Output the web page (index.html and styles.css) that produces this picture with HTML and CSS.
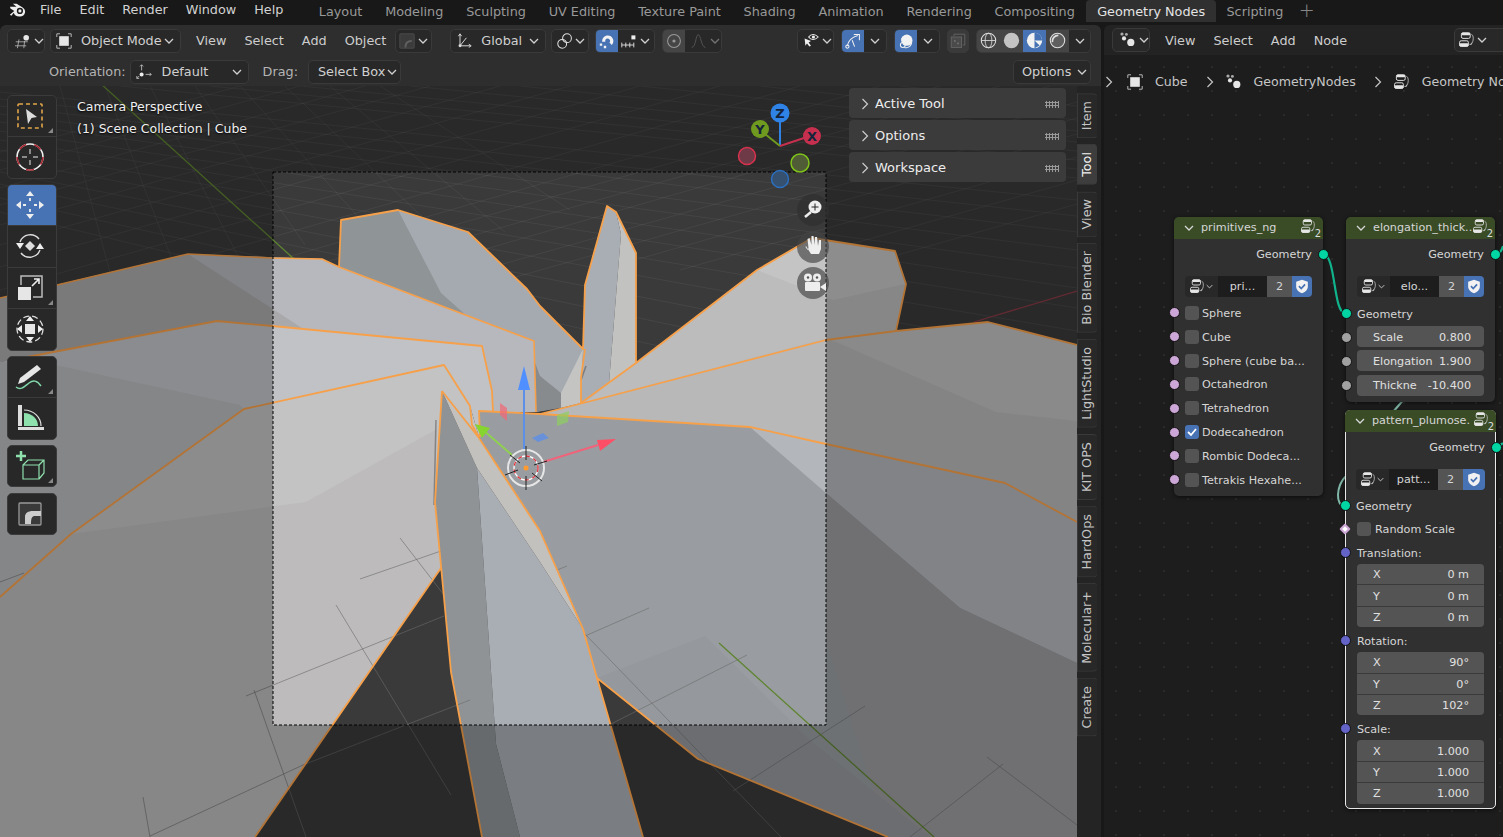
FILE: index.html
```html
<!DOCTYPE html>
<html lang="en">
<head>
<meta charset="utf-8">
<title>Blender Geometry Nodes</title>
<link rel="stylesheet" href="styles.css">
</head>
<body>
<svg class="defs" width="0" height="0" aria-hidden="true">
  <defs>
    <symbol id="chev" viewBox="0 0 10 6"><path d="M1 1l4 4 4-4" fill="none" stroke="currentColor" stroke-width="1.3"/></symbol>
    <symbol id="right" viewBox="0 0 8 12"><path d="M1.5 1l5 5-5 5" fill="none" stroke="currentColor" stroke-width="1.2"/></symbol>
    <symbol id="objmode" viewBox="0 0 20 20"><path d="M1 5V1h4M15 1h4v4M19 15v4h-4M5 19H1v-4" fill="none" stroke="#bbb" stroke-width="1.2"/><rect x="4" y="4" width="12" height="12" fill="#e6e6e6"/></symbol>
    <symbol id="nodes" viewBox="0 0 20 20"><circle cx="2.5" cy="2.5" r="2" fill="#aaa"/><circle cx="8" cy="3" r="1.8" fill="#aaa"/><circle cx="5" cy="8" r="2.6" fill="#e6e6e6"/><circle cx="13.5" cy="13" r="4.5" fill="#e6e6e6"/></symbol>
    <symbol id="ng" viewBox="0 0 20 20"><rect x="3" y="1" width="11" height="7" rx="2" fill="none" stroke="#e6e6e6" stroke-width="1.2"/><rect x="3" y="1" width="11" height="3" rx="1.5" fill="#e6e6e6"/><rect x="0.7" y="11" width="11" height="7" rx="2" fill="none" stroke="#e6e6e6" stroke-width="1.2"/><rect x="0.7" y="14" width="11" height="4" rx="1.5" fill="#e6e6e6"/><path d="M15.5 3c3 .5 3.300 9 -.5 12.500M13 15.500h2.500v-2" fill="none" stroke="#ccc"/></symbol>
    <symbol id="shield" viewBox="0 0 16 18"><path d="M8 .8l7 2.400v5.800c0 4-3.200 6.800-7 8.200-3.800-1.400-7-4.200-7-8.200V3.200z" fill="#f2f2f2"/><path d="M4.300 8.500l2.800 3 4.600-5" fill="none" stroke="#4772b3" stroke-width="2"/></symbol>
  </defs>
</svg>
<div class="app">
  <header class="topbar">
    <svg class="logo" viewBox="0 0 20 18"><path d="M1 6h7L4 3h4l6 3.500c5 3 3.500 9.500-2.500 10-3.500.3-6-1.500-6.500-4L2.500 15.500.8 14.500 5.500 10.500 1.500 8z" fill="#eee"/><circle cx="11.500" cy="10.500" r="3.300" fill="#181818"/><circle cx="11.500" cy="10.500" r="1.700" fill="#eee"/></svg>
    <nav class="mainmenu"><span>File</span><span>Edit</span><span>Render</span><span>Window</span><span>Help</span></nav>
    <nav class="tabs">
      <span class="tab">Layout</span><span class="tab">Modeling</span><span class="tab">Sculpting</span><span class="tab">UV Editing</span><span class="tab">Texture Paint</span><span class="tab">Shading</span><span class="tab">Animation</span><span class="tab">Rendering</span><span class="tab">Compositing</span><span class="tab tab-on">Geometry Nodes</span><span class="tab">Scripting</span><span class="tab tab-plus">+</span>
    </nav>
  </header>
  <main class="areas">
    <section class="left">
      <div class="toolheader">
        <div class="hrow hrow-1">
          <div class="btn b-editor"><svg class="ic16" viewBox="0 0 20 20"><circle cx="14" cy="6" r="3.500" fill="#e6e6e6"/><path d="M1 11h15M0 16h14M5 8L3 19M12 10l-1 9" stroke="#bbb" fill="none"/></svg><svg class="chev"><use href="#chev"/></svg></div>
          <div class="btn b-mode"><svg class="ic16"><use href="#objmode"/></svg><span class="grow">Object Mode</span><svg class="chev"><use href="#chev"/></svg></div>
          <span class="menu m-first">View</span><span class="menu">Select</span><span class="menu">Add</span><span class="menu">Object</span>
          <div class="btn b-dim"><svg class="ic16" viewBox="0 0 20 20"><rect x="1" y="1" width="18" height="18" rx="1" fill="#3d3d3d" stroke="#555"/><path d="M8 18c0-6 3-8 8-8" fill="none" stroke="#666" stroke-width="2.500"/></svg><svg class="chev"><use href="#chev"/></svg></div>
          <div class="btn b-global"><svg class="ic16" viewBox="0 0 20 20"><path d="M5 16V2M5 16h13M5 16L13 6M3 4l2-3 2 3M16 14l3 2-3 2" fill="none" stroke="#ddd" stroke-width="1.200"/><circle cx="5" cy="16" r="1.800" fill="#ddd"/></svg><span class="grow">Global</span><svg class="chev"><use href="#chev"/></svg></div>
          <div class="btn b-link"><svg class="ic16" viewBox="0 0 20 20"><circle cx="12.500" cy="6.500" r="5.500" fill="none" stroke="#ddd" stroke-width="1.300"/><circle cx="6.500" cy="13.500" r="5.500" fill="none" stroke="#ddd" stroke-width="1.300"/></svg><svg class="chev"><use href="#chev"/></svg></div>
          <div class="btn b-snap"><span class="on seg-22"><svg class="ic16" viewBox="0 0 20 20"><path d="M4 11a7 7 0 1 1 12 4l-3-3a3 3 0 1 0-5-1z" fill="#f2f2f2"/><path d="M1 13h3v3H1zM6 16h3v3H6z" fill="#f2f2f2"/></svg></span><svg class="ic16 pad-l" viewBox="0 0 20 20"><path d="M1 12v6M6 12v6M11 12v6M16 12v6M1 15h15" stroke="#ddd" fill="none" stroke-width="1.200"/><rect x="13" y="3" width="5" height="5" fill="#eee"/></svg><svg class="chev"><use href="#chev"/></svg></div>
          <div class="btn b-prop"><span class="seg-dim"><svg class="ic16" viewBox="0 0 20 20"><circle cx="10" cy="10" r="8" fill="none" stroke="#999" stroke-width="1.300"/><circle cx="10" cy="10" r="2" fill="#999"/></svg></span><svg class="ic16 pad-l dim" viewBox="0 0 20 20"><path d="M1 18c5 0 5-16 8-16s4 16 9 16" fill="none" stroke="#888" stroke-width="1.200"/></svg><svg class="chev dim"><use href="#chev"/></svg></div>
          <div class="spacer"></div>
          <div class="btn b-vis"><svg class="ic16" viewBox="0 0 20 20"><path d="M7 5c3-4 8-4 12 0-4 4-9 4-12 0z" fill="none" stroke="#eee" stroke-width="1.300"/><circle cx="13" cy="5" r="2" fill="#eee"/><path d="M2 7l8 3-3 2 3 4-2 1-3-4-2 3z" fill="#eee"/></svg><svg class="chev"><use href="#chev"/></svg></div>
          <div class="btn b-gizmo"><span class="on seg-22"><svg class="ic16" viewBox="0 0 20 20"><path d="M3 16c1-6 6-11 13-13" fill="none" stroke="#f2f2f2" stroke-width="1.300"/><path d="M11 2h7v7M9 9l3 8" fill="none" stroke="#f2f2f2" stroke-width="1.300"/><circle cx="3" cy="17" r="2" fill="none" stroke="#f2f2f2" stroke-width="1.300"/></svg></span><span class="seg-chev"><svg class="chev"><use href="#chev"/></svg></span></div>
          <div class="btn b-over"><span class="on seg-22"><svg class="ic16" viewBox="0 0 20 20"><path d="M4 8a7 7 0 1 1 4 10" fill="none" stroke="#f2f2f2" stroke-width="1.300"/><circle cx="11" cy="9" r="7" fill="#f2f2f2"/><circle cx="6" cy="15" r="3" fill="none" stroke="#f2f2f2" stroke-width="1.300"/></svg></span><span class="seg-chev"><svg class="chev"><use href="#chev"/></svg></span></div>
          <div class="btn b-xray"><svg class="ic16" viewBox="0 0 20 20"><rect x="1.500" y="5" width="13" height="13" fill="#4a4a4a" stroke="#6a6a6a"/><path d="M5 4V1.500h13.500V15H16" fill="none" stroke="#6a6a6a"/><rect x="5" y="9" width="2" height="2" fill="#777"/><rect x="9" y="12" width="2" height="2" fill="#777"/></svg></div>
          <div class="btn b-shade">
            <span class="shade"><svg class="ic17" viewBox="0 0 20 20"><circle cx="10" cy="10" r="8.500" fill="none" stroke="#ddd" stroke-width="1.200"/><ellipse cx="10" cy="10" rx="4" ry="8.500" fill="none" stroke="#ddd"/><path d="M1.500 10h17" stroke="#ddd"/></svg></span>
            <span class="shade"><svg class="ic17" viewBox="0 0 20 20"><circle cx="10" cy="10" r="9" fill="#c4c4c4"/></svg></span>
            <span class="shade shade-on"><svg class="ic17" viewBox="0 0 20 20"><circle cx="10" cy="10" r="9" fill="#f2f2f2"/><path d="M10 1a9 9 0 0 1 9 9l-9 0zM10 10l6 6-6 3z" fill="#4772b3"/></svg></span>
            <span class="shade"><svg class="ic17" viewBox="0 0 20 20"><circle cx="10" cy="10" r="8.500" fill="#5f5f5f" stroke="#ddd" stroke-width="1.300"/><path d="M4 12A7 7 0 0 1 11 4" fill="none" stroke="#ddd" stroke-width="2"/></svg></span>
            <span class="seg-chev"><svg class="chev"><use href="#chev"/></svg></span>
          </div>
        </div>
        <div class="hrow hrow-2">
          <span class="lbl l-orient">Orientation:</span>
          <div class="btn b-orient"><svg class="ic16" viewBox="0 0 20 20"><path d="M7 1v7M5 3l2-2 2 2M1 18l3-3M1 15v3h3M12 13h7M17 11l2 2-2 2" fill="none" stroke="#ccc"/><circle cx="7" cy="13" r="2.500" fill="#eee"/></svg><span class="grow">Default</span><svg class="chev"><use href="#chev"/></svg></div>
          <span class="lbl l-drag">Drag:</span>
          <div class="btn b-drag"><span class="grow">Select Box</span><svg class="chev"><use href="#chev"/></svg></div>
          <div class="spacer"></div>
          <div class="btn b-options"><span class="grow">Options</span><svg class="chev"><use href="#chev"/></svg></div>
        </div>
      </div>
      <div class="viewarea">
        <div class="viewport">
          <svg class="scene" viewBox="0 86 1077 751" width="1077" height="751">
            <rect x="0" y="86" width="1077" height="751" fill="#3a3a3a"/>
            <g class="gridlines">
              <path d="M0 92L1077 200M0 99L1077 216M0 106L1077 232M0 114L1077 250M0 122L1077 268M0 131L1077 288M0 140L1077 308M0 150L1077 331M0 160L1077 355M0 172L1077 382M0 184L1077 410M0 198L1077 440M0 212L1077 470M120 86L1077 178M210 86L1077 169M300 86L1077 160M410 86L1077 151M520 86L1077 142M640 86L1077 131M760 86L1077 120M900 86L1077 106"/>
              <path d="M0 152L240 86M0 170L300 86M0 188L365 86M0 205L430 86M0 225L500 86M0 245L570 86M0 267L640 86M0 290L720 86M0 315L800 86M0 340L880 86M70 335L940 86M140 330L1000 86M240 320L1050 86M340 310L1077 102M470 290L1077 118M600 270L1077 134M680 270L1077 157M760 270L1077 180M880 260L1077 204"/>
              <path d="M60 86L112 280M105 86L176 270M150 86L240 260M195 86L305 245M240 86L372 232M285 86L438 232M330 86L505 232M380 86L570 210"/>
            </g>
            <path class="axis-g" d="M100 83L294 259"/>
            <path class="axis-r" d="M974 322L1077 291"/>

            <polygon fill="#a5aab0" points="339,267 341,220 398,210 468,232 527,289 540,306 583,349 581,403 536,412 534,341"/>
            <polygon fill="#8f9497" points="339,267 341,220 398,210 441,293 468,317"/>
            <polygon fill="#878b8e" points="540,376 561,393 561,408 536,412 534,360"/>
            <polygon fill="#c4c4c2" points="561,393 583,349 581,403 561,408"/>

            <polygon fill="#b6b8bd" points="0,298 188,254 322,259 339,267 534,341 536,412 493,412 482,346 272,326 217,321 27,357 0,362"/>
            <polygon fill="#a9a9ab" points="0,298 57,285 188,254 305,330 272,326 217,321 27,357 0,362"/>

            <polygon fill="#c1c2c6" points="27,357 217,321 272,326 482,346 492,391 493,412 479,437 470,406 444,365 244,409 71,534 0,597 0,362"/>
            <polygon fill="#b9babd" points="60,366 240,405 244,409 71,534 0,597 0,362"/>

            <polygon fill="#c3c3c3" points="0,597 71,534 244,409 444,365 470,406 479,437 442,391 435,502 441,568 255,837 0,837"/>
            <polygon fill="#bdbbbb" points="71,534 306,502 437,429 435,502 441,568 255,837 0,837 0,597"/>

            <polygon fill="#bcbcbc" points="581,403 636,363 757,270 812,238 895,251 906,284 896,331 826,340 595,400"/>
            <polygon fill="#c4c4c4" points="757,270 833,300 905,284 895,251 812,238"/>
            <polygon fill="#a9aeb4" points="583,349 585,285 607,206 616,212 621,234 609,383 590,398 581,403"/>
            <polygon fill="#c2c2c0" points="616,212 636,253 636,363 609,383 621,234"/>

            <polygon fill="#bfbfbf" points="540,414 595,400 826,340 896,331 988,322 1077,345 1077,522 1005,483 826,444 750,427"/>
            <polygon fill="#b8b8b8" points="827,338 996,412 1077,421 1077,522 1005,483 826,444 750,427 540,414"/>

            <polygon fill="#999da1" points="480,411 540,414 750,427 826,444 1005,483 1077,522 1077,837 888,837 698,759 597,678 583,629 540,531 479,437"/>
            <polygon fill="#b3b6bb" points="750,427 826,444 1005,483 1077,522 1077,663 960,608 826,493"/>
            <polygon fill="#9b9b9e" points="826,493 960,608 1077,663 1077,837 888,837 826,640"/>
            <polygon fill="#95989c" points="597,678 698,759 888,837 930,837 810,740 705,636"/>

            <polygon fill="#8f9396" points="442,391 477,468 496,744 520,837 482,837 451,672 435,502"/>
            <polygon fill="#a9aeb4" points="477,468 540,562 583,629 597,678 643,837 520,837 496,744"/>
            <polygon fill="#c3c1bd" points="442,391 479,438 540,531 583,629 540,562 477,468"/>

            <path class="floor" d="M400 538L444 595M360 579L441 551M336 605L451 795M246 696L444 616M254 690L306 837M143 797L150 837M150 836L303 765L470 700M0 582L24 573M557 570L567 566M585 636L649 608M585 634L781 837M609 725L747 655M733 791L865 706M910 837L1003 764M987 757L1077 825"/>
            <path class="axis-g" d="M719 643L934 837"/>
            <path class="smudge" d="M436 420L434 505M586 366L581 380"/>

            <path class="edge edge-b" d="M0 298L57 285L188 254L272 258L322 259L339 267L534 341L536 412"/>
            <path class="edge" d="M339 267L341 220L398 210L468 232L527 289L540 306L583 349L585 285L607 206L616 212L636 253L636 363L757 270L812 238L895 251L906 284L896 331M585 349L581 378L581 403"/>
            <path class="edge" d="M27 357L217 321L272 326L482 346L492 391L493 412"/>
            <path class="edge" d="M0 597L71 534L244 409L444 365L470 406L472 425L479 437"/>
            <path class="edge" d="M480 437L479 411L540 414L750 427L826 444L1005 483L1077 522"/>
            <path class="edge" d="M540 414L595 400L826 340L896 331L988 322L1077 345M581 403L636 363"/>
            <path class="edge" d="M442 391L435 502L451 672L482 837M442 391L479 438L540 531L583 629L597 678L643 837M441 568L255 837M597 678L698 759L888 837"/>

            <path class="pass" fill-rule="evenodd" d="M0 86H1077V837H0ZM273 172H826V725H273Z"/>
            <rect class="frame" x="273" y="172" width="553" height="553"/>

            <g class="tgizmo">
              <path d="M524 389V450" stroke="#5b8fe8" stroke-width="2"/><polygon points="524,366 518,390 530,390" fill="#4f8fff"/>
              <path d="M483 430L512 455" stroke="#8fd14f" stroke-width="2"/><polygon points="475,424 490,428 482,438" fill="#85d42f"/>
              <path d="M543 462L598 445" stroke="#f0637a" stroke-width="2"/><polygon points="616,439 597,440 600,451" fill="#ff4f66"/>
              <polygon points="500,403 507,408 507,421 500,415" fill="#ee6b7a" opacity=".75"/>
              <polygon points="557,415 569,411 568,422 557,426" fill="#8fcf5f" opacity=".7"/>
              <polygon points="532,438 543,433 549,438 538,442" fill="#5b8fe8" opacity=".8"/>
              <circle cx="526" cy="468" r="18" fill="none" stroke="#e6e6e6" stroke-width="2"/>
              <circle cx="526" cy="468" r="12" fill="none" stroke="#fff" stroke-width="1.300"/>
              <circle cx="526" cy="468" r="12" fill="none" stroke="#e0303a" stroke-width="1.300" stroke-dasharray="4 4"/>
              <path d="M526 446V460M526 476V490M505 475L518 470M534 465L547 461M510 455L520 463M532 473L542 481" stroke="#222" fill="none"/>
              <circle cx="526" cy="468" r="2.500" fill="#ff9a2e"/>
            </g>

            <g class="ogizmo">
              <path d="M780 146V120" fill="none" stroke-width="2" stroke="#2f83e6"/>
              <path d="M780 146L765 134" stroke="#6f9a1f" stroke-width="2"/><path d="M780 146L804 138" stroke="#c6304e" stroke-width="2"/>
              <circle cx="747" cy="156" r="8.500" fill="#6e3a47" stroke="#d8324e" stroke-width="1.500"/>
              <circle cx="800" cy="163" r="9" fill="#4f5c35" stroke="#7fc31a" stroke-width="1.500"/>
              <circle cx="780" cy="179" r="8.500" fill="#36506f" stroke="#2b6fc0" stroke-width="1.500"/>
              <circle cx="780" cy="113" r="9.500" fill="#2f83e6"/><text x="780" y="118" class="gz">Z</text>
              <circle cx="760" cy="129" r="9" fill="#6f9a1f"/><text x="760" y="134" class="gz">Y</text>
              <circle cx="812" cy="136" r="9" fill="#c6304e"/><text x="812" y="141" class="gz">X</text>
            </g>

            <circle cx="813" cy="210" r="16" fill="#303030" opacity=".75"/>
            <circle cx="815" cy="207" r="6.500" fill="#eee"/><path d="M815 203.500v7M811.500 207h7" stroke="#222"/><path d="M811 212L805 217" stroke="#eee" stroke-width="2.500"/>
            <circle cx="813" cy="247" r="16" fill="#444" opacity=".65"/>
            <path d="M806 246l5 8h8l2-5 0-9-2 0-1 6-1-9-2 0-.5 8-1-9-2 0 0 9-2-7-2 1 1 9-1 2-2-3z" fill="#eee"/>
            <circle cx="813" cy="283" r="16" fill="#444" opacity=".65"/>
            <circle cx="808" cy="277.500" r="4" fill="#eee"/><circle cx="817" cy="277.500" r="4" fill="#eee"/><rect x="805" y="282" width="15" height="9" rx="1" fill="#eee"/><polygon points="820,287 826,283 826,291" fill="#eee"/><circle cx="808" cy="277.500" r="1.200" fill="#555"/><circle cx="817" cy="277.500" r="1.200" fill="#555"/>
          </svg>

          <div class="vinfo"><div>Camera Perspective</div><div>(1) Scene Collection | Cube</div></div>

          <div class="toolbar">
            <div class="tgroup">
              <div class="tool corner"><svg class="ic30" viewBox="0 0 30 30"><rect x="3" y="3" width="24" height="24" rx="1" fill="none" stroke="#e0a548" stroke-width="1.600" stroke-dasharray="4 3"/><path d="M11 8L22 16L16.500 17L13 23z" fill="#ddd"/></svg></div>
              <div class="tool"><svg class="ic30" viewBox="0 0 30 30"><circle cx="15" cy="15" r="13" fill="none" stroke="#eee" stroke-width="1.600"/><circle cx="15" cy="15" r="13" fill="none" stroke="#a5232e" stroke-width="1.600" stroke-dasharray="8 8.300"/><path d="M15 7v5M15 18v5M7 15h5M18 15h5" stroke="#aaa" stroke-width="1.500"/></svg></div>
            </div>
            <div class="tgroup">
              <div class="tool tool-on"><svg class="ic30" viewBox="0 0 30 30"><path d="M15 1l4 5h-8zM15 29l4-5h-8zM1 15l5-4v8zM29 15l-5-4v8z" fill="#eee"/><path d="M15 8v3M15 19v3M8 15h3M19 15h3" stroke="#eee" stroke-width="1.800"/></svg></div>
              <div class="tool"><svg class="ic30" viewBox="0 0 30 30"><path d="M5 11A11 11 0 0 1 24 8M25 19A11 11 0 0 1 6 22" fill="none" stroke="#ddd" stroke-width="1.400"/><path d="M15 10l5 5-5 5-5-5z" fill="#ddd"/><path d="M1 12h8l-4 6zM21 18h8l-4-6z" fill="#eee"/></svg></div>
              <div class="tool corner"><svg class="ic30" viewBox="0 0 30 30"><rect x="3" y="14" width="13" height="13" fill="#e6e6e6"/><path d="M6 12V3h21v21h-9" fill="none" stroke="#bbb" stroke-width="1.500"/><path d="M17 13l7-7M19 6h5v5" fill="none" stroke="#eee" stroke-width="1.600"/></svg></div>
              <div class="tool"><svg class="ic30" viewBox="0 0 30 30"><circle cx="15" cy="15" r="13" fill="none" stroke="#ddd" stroke-width="1.300" stroke-dasharray="6 3"/><rect x="10" y="10" width="10" height="10" fill="#e6e6e6"/><path d="M15 2l4 5h-8zM15 28l4-5h-8zM2 15l5-4v8zM28 15l-5-4v8z" fill="#eee"/></svg></div>
            </div>
            <div class="tgroup">
              <div class="tool corner"><svg class="ic30" viewBox="0 0 30 30"><path d="M22 3l4 4L9 20l-6 2 2-6z" fill="#e6e6e6"/><path d="M1 25c5 4 9-1 13-4s8-3 12 3" fill="none" stroke="#7fd6a8" stroke-width="1.500"/></svg></div>
              <div class="tool"><svg class="ic30" viewBox="0 0 30 30"><path d="M3 2h4v21h-4zM3 24h26v3h-26z" fill="#ddd"/><path d="M9 23V10a14 13 0 0 1 14 13z" fill="#8ee0ad"/><path d="M9 7a17 16 0 0 1 17 16" fill="none" stroke="#ddd" stroke-width="1.200"/></svg></div>
            </div>
            <div class="tgroup">
              <div class="tool corner"><svg class="ic30" viewBox="0 0 30 30"><path d="M8 14h16v14H8zM8 14l5-5h16v13l-5 6M24 14l5-5" fill="none" stroke="#8ee0ad" stroke-width="1.200"/><path d="M6 0v10M1 5h10" stroke="#8ee0ad" stroke-width="2.500"/></svg></div>
            </div>
            <div class="tgroup">
              <div class="tool"><svg class="ic30" viewBox="0 0 30 30"><rect x="4" y="4" width="22" height="22" rx="1" fill="#3a3a3a" stroke="#999" stroke-width="1.300"/><path d="M10 25V18c0-4 3-6 8-6h8v5h-6c-3 0-4 2-4 8z" fill="#ccc"/></svg></div>
            </div>
          </div>

          <div class="panels">
            <div class="panel"><svg class="pchev"><use href="#right"/></svg><span class="ptitle">Active Tool</span><span class="grip"></span></div>
            <div class="panel"><svg class="pchev"><use href="#right"/></svg><span class="ptitle">Options</span><span class="grip"></span></div>
            <div class="panel"><svg class="pchev"><use href="#right"/></svg><span class="ptitle">Workspace</span><span class="grip"></span></div>
          </div>
        </div>
        <aside class="sidetabs">
          <span class="stab">Item</span><span class="stab stab-on">Tool</span><span class="stab">View</span><span class="stab">Bio Blender</span><span class="stab">LightStudio</span><span class="stab">KIT OPS</span><span class="stab">HardOps</span><span class="stab">Molecular+</span><span class="stab">Create</span>
        </aside>
      </div>
    </section>

    <section class="right">
      <div class="nodeheader">
        <div class="btn b-editor"><svg class="ic16"><use href="#nodes"/></svg><svg class="chev"><use href="#chev"/></svg></div>
        <span class="menu m-first">View</span><span class="menu">Select</span><span class="menu">Add</span><span class="menu">Node</span>
        <div class="spacer"></div>
        <div class="btn b-ngclip"><svg class="ic16"><use href="#ng"/></svg><svg class="chev"><use href="#chev"/></svg></div>
      </div>
      <div class="canvas">
        <div class="crumbs">
          <svg class="crumb-sep first"><use href="#right"/></svg>
          <svg class="ic16"><use href="#objmode"/></svg><span class="crumb">Cube</span>
          <svg class="crumb-sep"><use href="#right"/></svg>
          <svg class="ic16"><use href="#nodes"/></svg><span class="crumb">GeometryNodes</span>
          <svg class="crumb-sep"><use href="#right"/></svg>
          <svg class="ic16"><use href="#ng"/></svg><span class="crumb">Geometry No</span>
        </div>
        <svg class="links" viewBox="1104 55 399 782" width="399" height="782">
          <path class="link" d="M1323 254C1336 254 1333 313 1345 313"/>
          <path class="link" d="M1495 254C1500 254 1502 250 1503 246"/>
          <path class="link" d="M1495 447C1499 447 1501 445 1503 443"/>
          <path class="link link-pale" d="M1405 398L1393 412"/>
          <path class="link link-pale" d="M1346 476C1336 486 1335 506 1345 506"/>
        </svg>

        <article class="node n1">
          <div class="nhead"><svg class="nchev"><use href="#chev"/></svg><span class="ntitle">primitives_ng</span><span class="nbadge"><svg class="ic15"><use href="#ng"/></svg><i>2</i></span></div>
          <div class="nrow out"><span>Geometry</span><b class="sock teal s-r"></b></div>
          <div class="selector"><span class="sel-ic"><svg class="ic15"><use href="#ng"/></svg><svg class="chev"><use href="#chev"/></svg></span><span class="sel-name">pri...</span><span class="sel-num">2</span><span class="sel-shield"><svg class="ic14"><use href="#shield"/></svg></span></div>
          <div class="checks">
            <div class="nrow chk"><b class="sock pink s-l"></b><i class="box"></i><span>Sphere</span></div>
            <div class="nrow chk"><b class="sock pink s-l"></b><i class="box"></i><span>Cube</span></div>
            <div class="nrow chk"><b class="sock pink s-l"></b><i class="box"></i><span>Sphere (cube ba...</span></div>
            <div class="nrow chk"><b class="sock pink s-l"></b><i class="box"></i><span>Octahedron</span></div>
            <div class="nrow chk"><b class="sock pink s-l"></b><i class="box"></i><span>Tetrahedron</span></div>
            <div class="nrow chk"><b class="sock pink s-l"></b><i class="box box-on"><svg viewBox="0 0 14 14"><path d="M3 7l3 3 5-6" fill="none" stroke="#fff" stroke-width="1.800"/></svg></i><span>Dodecahedron</span></div>
            <div class="nrow chk"><b class="sock pink s-l"></b><i class="box"></i><span>Rombic Dodeca...</span></div>
            <div class="nrow chk"><b class="sock pink s-l"></b><i class="box"></i><span>Tetrakis Hexahe...</span></div>
          </div>
        </article>

        <article class="node n2">
          <div class="nhead"><svg class="nchev"><use href="#chev"/></svg><span class="ntitle">elongation_thick..</span><span class="nbadge"><svg class="ic15"><use href="#ng"/></svg><i>2</i></span></div>
          <div class="nrow out"><span>Geometry</span><b class="sock teal s-r"></b></div>
          <div class="selector"><span class="sel-ic"><svg class="ic15"><use href="#ng"/></svg><svg class="chev"><use href="#chev"/></svg></span><span class="sel-name">elo...</span><span class="sel-num">2</span><span class="sel-shield"><svg class="ic14"><use href="#shield"/></svg></span></div>
          <div class="nrow in in-geo"><b class="sock teal s-l"></b><span>Geometry</span></div>
          <div class="frow"><b class="sock grey s-l"></b><div class="field"><span>Scale</span><span>0.800</span></div></div>
          <div class="frow"><b class="sock grey s-l"></b><div class="field"><span>Elongation</span><span>1.900</span></div></div>
          <div class="frow"><b class="sock grey s-l"></b><div class="field"><span>Thickne</span><span>-10.400</span></div></div>
        </article>

        <article class="node n3">
          <div class="nhead"><svg class="nchev"><use href="#chev"/></svg><span class="ntitle">pattern_plumose.</span><span class="nbadge"><svg class="ic15"><use href="#ng"/></svg><i>2</i></span></div>
          <div class="nrow out"><span>Geometry</span><b class="sock teal s-r"></b></div>
          <div class="selector"><span class="sel-ic"><svg class="ic15"><use href="#ng"/></svg><svg class="chev"><use href="#chev"/></svg></span><span class="sel-name">patt...</span><span class="sel-num">2</span><span class="sel-shield"><svg class="ic14"><use href="#shield"/></svg></span></div>
          <div class="nrow in in-geo"><b class="sock teal s-l"></b><span>Geometry</span></div>
          <div class="nrow chk chk-r"><b class="sock pink diamond s-l"></b><i class="box"></i><span>Random Scale</span></div>
          <div class="nrow in vlabel"><b class="sock violet s-l"></b><span>Translation:</span></div>
          <div class="vec"><div><span>X</span><span>0 m</span></div><div><span>Y</span><span>0 m</span></div><div><span>Z</span><span>0 m</span></div></div>
          <div class="nrow in vlabel"><b class="sock violet s-l"></b><span>Rotation:</span></div>
          <div class="vec"><div><span>X</span><span>90°</span></div><div><span>Y</span><span>0°</span></div><div><span>Z</span><span>102°</span></div></div>
          <div class="nrow in vlabel"><b class="sock violet s-l"></b><span>Scale:</span></div>
          <div class="vec"><div><span>X</span><span>1.000</span></div><div><span>Y</span><span>1.000</span></div><div><span>Z</span><span>1.000</span></div></div>
        </article>
      </div>
    </section>
  </main>
</div>
</body>
</html>
```

FILE: styles.css
```css
*{box-sizing:border-box}
html,body{margin:0;height:100%;overflow:hidden;background:#181818}
body{font:12.8px/1.25 "DejaVu Sans","Liberation Sans",sans-serif;color:#cfcfcf}
.defs{position:absolute}
.app{display:flex;flex-direction:column;width:1503px;height:837px}

/* top bar */
.topbar{height:25px;flex:none;display:flex;align-items:flex-start;background:#181818;position:relative}
.logo{width:19px;height:17px;margin:1px 0 0 9px;flex:none}
.mainmenu{display:flex;gap:18px;margin-left:12px;padding-top:2px;height:17px;align-items:center;color:#d2d2d2}
.tabs{display:flex;margin-left:24px;align-items:flex-start}
.tab{height:22px;padding:4px 11.400px 0;color:#999;white-space:nowrap}
.tab-on{background:#303030;color:#e4e4e4;border-radius:4px 4px 0 0;padding:4px 11px 0;margin:0 -1px 0 0}
.tab-plus{font-size:19px;padding:0 0 0 4px;color:#888;font-weight:300;line-height:1.1}

.areas{flex:1;display:flex;gap:3px;min-height:0}
.left{width:1101px;display:flex;flex-direction:column;border-radius:6px 6px 0 0;overflow:hidden}
.right{flex:1;display:flex;flex-direction:column;border-radius:6px 0 0 0;overflow:hidden;background:#1d1d1d}

/* 3D header */
.toolheader{height:61px;flex:none;background:#2e2e2e;color:#c9c9c9}
.hrow{display:flex;align-items:center;padding:0 10px 0 7px}
.hrow-1{height:31px;padding-top:0}
.hrow-2{height:30px;padding-top:2px}
.spacer{flex:1}
.btn{height:24px;display:flex;align-items:center;background:#282828;border:1px solid #3a3a3a;border-radius:5px;flex:none;color:#d0d0d0;padding:0 5px;white-space:nowrap;overflow:hidden}
.grow{flex:1;min-width:0}
.chev{width:10px;height:6px;color:#d0d0d0;flex:none}
.ic16{width:16px;height:16px;flex:none}
.ic17{width:17px;height:17px}
.ic15{width:15px;height:15px;flex:none}
.ic14{width:14px;height:15px}
.ic30{width:30px;height:30px}
.pad-l{margin-left:9px}
.dim{opacity:.45}
.menu{flex:none;margin-left:18px;color:#cdcdcd}
.m-first{margin-left:15px}
.b-editor{width:38px;gap:3px;padding:0 4px 0 7px}
.b-mode{width:131px;margin-left:5px;gap:9px;padding:0 6px 0 5px}
.b-dim{width:37px;margin-left:9px;gap:3px;padding:0 6px 0 3px}
.b-dim .ic16{opacity:.9}
.b-global{width:96px;margin-left:18px;gap:9px;padding:0 6px 0 5px}
.b-link{width:38px;margin-left:5px;gap:2px;padding:0 4px 0 5px}
.b-snap{width:60px;margin-left:6px;padding:0 4px 0 0}
.b-snap .pad-l{margin-left:3px;margin-right:3px}
.on{display:flex;align-items:center;justify-content:center;background:#4772b3;height:22px}
.seg-22{width:22px;flex:none}
.seg-dim{display:flex;align-items:center;justify-content:center;background:#454545;width:22px;height:22px;flex:none}
.seg-chev{flex:1;display:flex;align-items:center;justify-content:center;height:22px}
.b-prop{width:60px;margin-left:7px;padding:0 2px 0 0;gap:3px}
.b-prop .pad-l{margin-left:3px}
.b-vis{width:37px;gap:3px;padding:0 4px 0 5px}
.b-gizmo{width:46px;margin-left:7px;padding:0}
.b-over{width:46px;margin-left:7px;padding:0}
.b-xray{width:22px;margin-left:7px;padding:0 2px;background:#3a3a3a}
.b-shade{width:115px;margin-left:7px;padding:0}
.shade{width:23px;height:22px;background:#454545;display:flex;align-items:center;justify-content:center;flex:none}
.shade-on{background:#4772b3}
.lbl{flex:none;color:#b4b4b4}
.l-orient{margin-left:42px}
.b-orient{width:119px;margin-left:4px;gap:10px;padding:0 6px 0 5px}
.l-drag{margin-left:14px}
.b-drag{width:93px;margin-left:10px;padding:0 3px 0 9px}
.b-options{width:78px;padding:0 3px 0 8px}

/* viewport */
.viewarea{flex:1;display:flex;min-height:0;background:#242424}
.viewport{width:1077px;flex:none;position:relative;overflow:hidden}
.scene{display:block}
.gridlines path{fill:none;stroke:#fff;stroke-opacity:.055;stroke-width:1}
.axis-g{fill:none;stroke:#5f8430;stroke-width:1.300}
.axis-r{fill:none;stroke:#8b3a46;stroke-width:1.300}
.floor{fill:none;stroke:#6b6b6b;stroke-opacity:.6;stroke-width:1}
.smudge{fill:none;stroke:#555;stroke-width:1.500;opacity:.55}
.edge{fill:none;stroke:#f7a04a;stroke-width:1.800;stroke-linejoin:round}
.edge-b{stroke-width:1.600}
.pass{fill:#000;fill-opacity:.28}
.frame{fill:none;stroke:#000;stroke-width:1;stroke-dasharray:3 2}
.gz{font:bold 13px "DejaVu Sans",sans-serif;text-anchor:middle;fill:#15233a}

.vinfo{position:absolute;left:77px;top:10px;color:#f0f0f0;line-height:22px;font-size:12.500px;text-shadow:0 1px 2px #000}

.toolbar{position:absolute;left:7px;top:9px;display:flex;flex-direction:column;gap:5.500px;width:50px}
.tgroup{background:#282828;border:1px solid #3b3b3b;border-radius:5px;overflow:hidden}
.tool{height:41.500px;display:flex;align-items:center;justify-content:center;position:relative;border-top:1px solid #3b3b3b;padding-right:4px}
.tool:first-child{border-top:0;height:40px}
.tool-on{background:#4772b3}
.corner::after{content:"";position:absolute;right:3px;bottom:3px;width:5px;height:5px;background:#888;clip-path:polygon(100% 0,100% 100%,0 100%)}

.panels{position:absolute;left:849px;top:2px;width:217px;display:flex;flex-direction:column;gap:2px;font-size:13px}
.panel{height:30px;background:#3b3b3b;border-radius:4px;display:flex;align-items:center;padding:2px 7px 0 12px;color:#ededed}
.pchev{width:8px;height:12px;color:#ccc;flex:none}
.ptitle{margin-left:6px;flex:1}
.grip{width:14px;height:7px;background-image:radial-gradient(circle,#9a9a9a 1px,transparent 1.200px);background-size:3px 3px}

.sidetabs{flex:1;display:flex;flex-direction:column;gap:6px;padding-top:7px;align-items:flex-start}
.stab{writing-mode:vertical-rl;transform:rotate(180deg);width:20px;padding:7px 0;text-align:center;background:#282828;border:1px solid #3a3a3a;border-left:0;border-radius:4px 0 0 4px;color:#c4c4c4;line-height:18px}
.stab-on{background:#3d3d3d;color:#f0f0f0}

/* node editor */
.nodeheader{height:30px;flex:none;display:flex;align-items:center;padding:1px 0 0 8px;background:#232323;color:#c9c9c9}
.nodeheader .btn{margin-top:-1px}
.b-ngclip{width:50px;gap:2px;margin-right:-1px;border-radius:5px 0 0 5px;padding:0 4px;justify-content:flex-start}
.canvas{flex:1;position:relative;overflow:hidden;background:#1d1d1d;background-image:radial-gradient(circle,#2a2a2a 1px,transparent 1.200px);background-size:24px 24px}
.crumbs{position:absolute;left:0;top:18px;display:flex;align-items:center;white-space:nowrap;color:#c6c6c6;height:18px;font-size:12.600px}
.crumb{margin-left:12px}
.crumb-sep{width:8px;height:12px;color:#c6c6c6;margin:0 12px 0 18px}
.crumb-sep.first{margin:0 14px 0 1px}
.links{position:absolute;left:0;top:0}
.link{fill:none;stroke:#10b48c;stroke-width:2.200}
.link-pale{stroke:#7fb8a8;stroke-width:2}

.node{position:absolute;width:149px;background:#303030;border-radius:5px;font-size:11.200px;color:#d6d6d6;box-shadow:0 1px 4px rgba(0,0,0,.6)}
.n1{left:70px;top:162px;height:279px}
.n2{left:242px;top:162px;height:185px}
.n3{left:241px;top:355px;width:151px;height:399px;outline:1px solid #e8e8e8;outline-offset:-1px}
.nhead{height:22px;background:#3a4c26;border-radius:5px 5px 0 0;display:flex;align-items:center;padding:0 1px 0 10px;position:relative}
.nchev{width:10px;height:6px;color:#d6d6d6;flex:none}
.ntitle{margin-left:7px;flex:1;white-space:nowrap}
.nbadge{position:relative;width:20px;height:18px;flex:none}
.nbadge .ic15{position:absolute;left:-1px;top:0}
.nbadge i{position:absolute;right:1px;bottom:-2px;font:normal 10px "DejaVu Sans",sans-serif;color:#ddd}
.nrow{position:relative;display:flex;align-items:center}
.nrow span,.field span,.vec span{padding-top:2px}
.out{height:22px;margin-top:4px;justify-content:flex-end;padding-right:11px}
.sock{position:absolute;width:11px;height:11px;border-radius:50%;border:1px solid #111;top:50%;margin-top:-5.500px;z-index:1}
.s-l{left:-5.500px}
.s-r{right:-5.500px}
.teal{background:#00d6a3}
.pink{background:#cca6d6}
.grey{background:#a1a1a1}
.violet{background:#6363c7}
.diamond{border-radius:1px;transform:rotate(45deg);width:8px;height:8px;margin-top:-4px;left:-4px;border:2px solid #cca6d6;background:#fff}
.selector{display:flex;height:21px;margin:11px 11px 0;border-radius:4px;overflow:hidden}
.selector span{display:flex;align-items:center;justify-content:center}
.sel-ic{width:33px;background:#282828;gap:1px}
.sel-ic .chev{width:7px;height:5px}
.sel-name{width:49px;background:#1d1d1d}
.sel-num{width:25px;background:#545454}
.sel-shield{flex:1;background:#4772b3}
.checks{margin-top:4px}
.chk{height:23.850px;padding-left:11px;gap:3px}
.box{width:14px;height:14px;background:#545454;border-radius:3px;flex:none;display:block}
.box-on{background:#4772b3}
.box svg{display:block}
.chk span{white-space:nowrap}
.in{padding-left:11px}
.in-geo{height:23px;margin-top:5px}
.n3 .in-geo{margin-top:4px}
.frow{position:relative;height:24.300px;padding:1px 11px 2px}
.field{height:21px;background:#545454;border-radius:4px;display:flex;align-items:center;justify-content:space-between;padding:0 13px 0 16px;color:#e0e0e0}
.chk-r{height:24px;padding-left:12px;gap:4px}
.vlabel{height:23px;padding-left:12px}
.vec{margin:0 12px 2px;border-radius:4px;overflow:hidden;display:flex;flex-direction:column;gap:1px;background:#3a3a3a}
.vec div{height:20.400px;background:#545454;display:flex;align-items:center;justify-content:space-between;padding:0 15px 0 16px;color:#e0e0e0}
```
